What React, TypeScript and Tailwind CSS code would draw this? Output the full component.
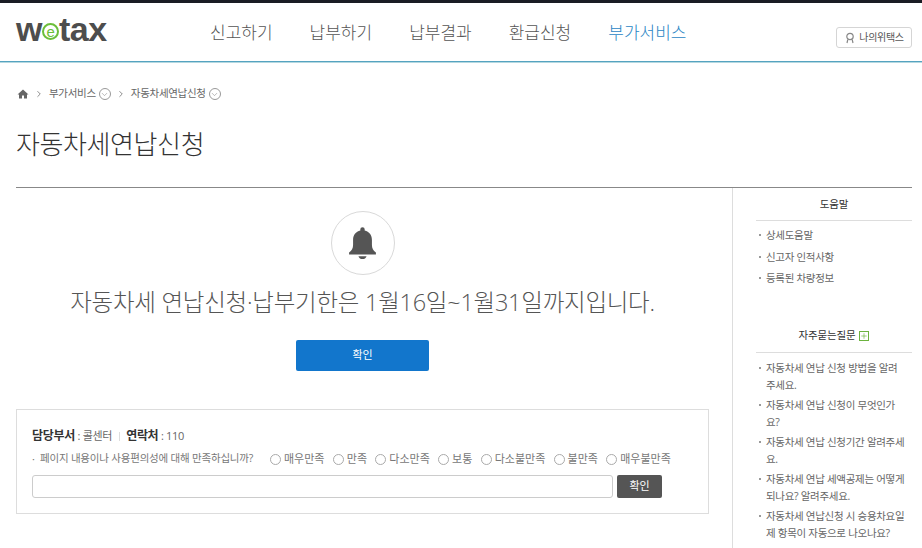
import React from 'react';
import { ChevronRight, ChevronDown, Plus } from 'lucide-react';

const font = "font-['Open_Sans','Noto_Sans_CJK_KR',sans-serif]";

const Circle: React.FC = () => (
  <span className="ml-[3px] inline-flex h-[12px] w-[12px] items-center justify-center rounded-full border border-[#999]">
    <ChevronDown className="h-[9px] w-[9px] text-[#888]" strokeWidth={1.5} />
  </span>
);

const Bullet: React.FC<{ children: React.ReactNode }> = ({ children }) => (
  <li className="relative pl-[10px] text-[10.5px] leading-[17px] tracking-[-0.3px] text-[#666]">
    <span className="absolute left-[3px] top-[7px] h-[2px] w-[2px] rounded-full bg-[#777]" />
    {children}
  </li>
);

const App: React.FC = () => {
  const menus = ['신고하기', '납부하기', '납부결과', '환급신청'];
  const ratings = ['매우만족', '만족', '다소만족', '보통', '다소불만족', '불만족', '매우불만족'];
  const faqs = [
    '자동차세 연납 신청 방법을 알려주세요.',
    '자동차세 연납 신청이 무엇인가요?',
    '자동차세 연납 신청기간 알려주세요.',
    '자동차세 연납 세액공제는 어떻게 되나요? 알려주세요.',
    '자동차세 연납신청 시 승용차요일제 항목이 자동으로 나오나요?',
  ];

  return (
    <div className={`h-[548px] w-[922px] overflow-hidden bg-white ${font}`}>
      <div className="h-[3px] bg-[#1a1c24]" />

      <header className="flex h-[59px] items-start border-b border-[#55a3c0] shadow-[0_1px_0_#b5d8e0]">
        <div className="ml-[16px] mt-[10px] flex h-[32px] w-[178px] items-center font-['Liberation_Sans',sans-serif] text-[34px] font-bold leading-none tracking-[-0.5px] text-[#4d4d4d]">
          w
          <span className="mt-[5px] flex h-[17px] w-[17px] items-center justify-center rounded-full border-2 border-[#6cbf3a] text-[15px] font-normal text-[#6cbf3a]">
            e
          </span>
          tax
        </div>
        <nav className="ml-[16px] mt-[18px] flex gap-[37px] text-[17px] font-light leading-[24px] text-[#555]">
          {menus.map((menu) => (
            <span key={menu}>{menu}</span>
          ))}
          <span className="text-[#2b85c4]">부가서비스</span>
        </nav>
        <button className="ml-auto mr-[10px] mt-[24px] flex h-[21px] w-[76px] items-center justify-center gap-[3px] rounded-[3px] border border-[#d5d5d5] text-[10px] tracking-[-0.3px] text-[#555]">
          <svg viewBox="0 0 12 12" className="h-[12px] w-[12px] fill-none stroke-[#888]" strokeWidth={1.2}>
            <circle cx="6" cy="4.5" r="3.2" />
            <path d="M3.8 7.5 3 11M8.2 7.5 9 11" />
          </svg>
          나의위택스
        </button>
      </header>

      <div className="ml-[17px] mt-[25px] flex h-[14px] items-center text-[10.5px] tracking-[-0.3px] text-[#666]">
        <svg viewBox="0 0 24 24" className="h-[12px] w-[12px] fill-[#666]">
          <path d="M12 3 1 13h3v8h6v-6h4v6h6v-8h3z" />
        </svg>
        <ChevronRight className="mx-[5px] h-[10px] w-[10px] text-[#777]" />
        부가서비스
        <Circle />
        <ChevronRight className="mx-[5px] h-[10px] w-[10px] text-[#777]" />
        자동차세연납신청
        <Circle />
      </div>

      <h1 className="ml-[16px] mt-[24px] text-[26px] font-light leading-[38px] tracking-[-0.4px] text-[#333]">
        자동차세연납신청
      </h1>

      <div className="ml-[16px] mr-[10px] mt-[24px] flex h-[361px] border-t border-[#888]">
        <main className="w-[717px] shrink-0 border-r border-[#ddd] pr-[23px]">
          <div className="flex flex-col items-center">
            <div className="mt-[23px] flex h-[64px] w-[64px] items-center justify-center rounded-full border border-[#d9d9d9]">
              <svg viewBox="0 0 32 36" className="h-[33px] w-[29px] fill-[#555]">
                <path d="M16 0a2.4 2.4 0 0 0-2.4 2.4v1.3C8.6 4.8 5.6 8.8 5.6 14v5.6c0 3.6-1.4 6-4.4 8.4v2h29.6v-2c-3-2.4-4.4-4.8-4.4-8.4V14c0-5.2-3-9.2-8-10.3V2.4A2.4 2.4 0 0 0 16 0z" />
                <path d="M11.5 32h9c-.8 2-2.4 3.2-4.5 3.2S12.3 34 11.5 32z" />
              </svg>
            </div>
            <p className="mt-[11px] whitespace-nowrap text-[23.5px] font-light leading-[32px] tracking-[-0.25px] text-[#555]">
              자동차세 연납신청·납부기한은 1월16일~1월31일까지입니다.
            </p>
            <button className="mt-[22px] h-[31px] w-[133px] rounded-[2px] bg-[#1276cc] text-[11px] text-white">
              확인
            </button>
          </div>

          <section className="mt-[38px] h-[105px] border border-[#ddd] px-[15px] pt-[18px]">
            <div className="flex items-center text-[11px] leading-[16px] tracking-[-0.3px] text-[#666]">
              <b className="text-[12px] text-[#333]">담당부서</b>&nbsp;: 콜센터
              <span className="mx-[6.5px] h-[9px] w-px bg-[#ddd]" />
              <b className="text-[12px] text-[#333]">연락처</b>&nbsp;: 110
            </div>
            <div className="mt-[7px] flex h-[16px] items-center text-[11px] text-[#777]">
              <span className="w-[8px]">·</span>
              <span className="w-[230px] text-[10.5px] tracking-[-0.2px]">페이지 내용이나 사용편의성에 대해 만족하십니까?</span>
              {ratings.map((rating) => (
                <span key={rating} className="mr-[8.3px] flex items-center">
                  <span className="mr-[3px] h-[11px] w-[11px] rounded-full border border-[#aaa]" />
                  {rating}
                </span>
              ))}
            </div>
            <div className="mt-[8px] flex gap-[4px]">
              <div className="h-[23px] w-[581px] rounded-[3px] border border-[#ccc]" />
              <button className="h-[23px] w-[45px] rounded-[2px] bg-[#555] text-[11px] text-white">확인</button>
            </div>
          </section>
        </main>

        <aside className="ml-[23px] flex-1">
          <h2 className="h-[33px] border-b border-[#ddd] pt-[8px] text-center text-[10.5px] leading-[17px] tracking-[-0.2px] text-[#333]">
            도움말
          </h2>
          <ul className="mt-[6px] flex flex-col gap-[4.5px]">
            <Bullet>상세도움말</Bullet>
            <Bullet>신고자 인적사항</Bullet>
            <Bullet>등록된 차량정보</Bullet>
          </ul>
          <h2 className="mt-[40px] flex h-[26px] items-start justify-center border-b border-[#ddd] text-[10.5px] leading-[17px] tracking-[-0.2px] text-[#333]">
            자주묻는질문
            <span className="ml-[4px] mt-[4px] flex h-[10px] w-[10px] items-center justify-center border border-[#6cb33f]">
              <Plus className="h-[8px] w-[8px] text-[#6cb33f]" />
            </span>
          </h2>
          <ul className="mt-[7px] flex flex-col gap-[3px] pr-[6px]">
            {faqs.map((faq) => (
              <Bullet key={faq}>{faq}</Bullet>
            ))}
          </ul>
        </aside>
      </div>
    </div>
  );
};

export default App;
